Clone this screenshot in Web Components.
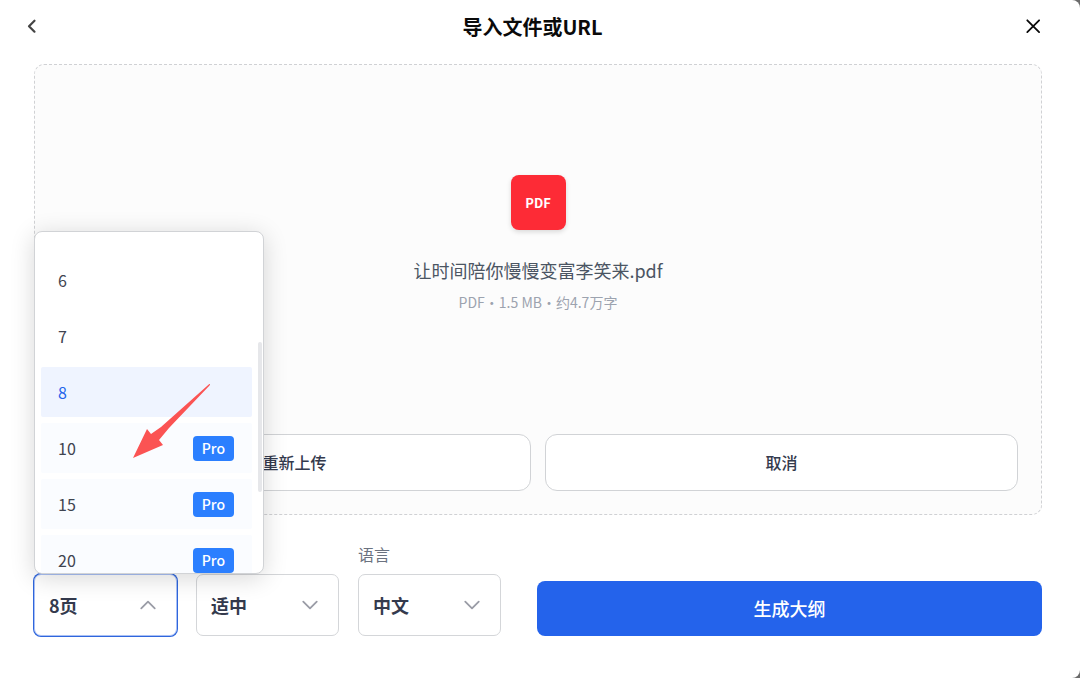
<!DOCTYPE html>
<html lang="zh-CN">
<head>
<meta charset="utf-8">
<meta name="viewport" content="width=device-width, initial-scale=1">
<title>导入文件或URL</title>
<style>
  body {
    margin: 0;
    background: #6b6b6b;
    font-family: "Noto Sans CJK SC", "Noto Sans", sans-serif;
    color: #343a4d;
  }
</style>
</head>
<body>
  <import-dialog heading="导入文件或URL">
    <file-drop-zone>
      <file-card type="PDF" name="让时间陪你慢慢变富李笑来.pdf" meta="PDF・1.5 MB・约4.7万字"></file-card>
      <outline-button slot="actions">重新上传</outline-button>
      <outline-button slot="actions">取消</outline-button>
    </file-drop-zone>
    <select-field slot="options" name="页数" value="8页" open>
      <option-menu slot="menu" selected="8" options="6,7,8,10,15,20" pro="10,15,20"></option-menu>
    </select-field>
    <select-field slot="options" name="文本量" value="适中"></select-field>
    <select-field slot="options" label="语言" value="中文"></select-field>
    <primary-button slot="submit">生成大纲</primary-button>
  </import-dialog>

<script>
class ImportDialog extends HTMLElement {
  constructor() {
    super();
    this.attachShadow({ mode: "open" });
  }

  connectedCallback() {
    this.shadowRoot.innerHTML = `
      <style>
        :host {
          display: flex;
          flex-direction: column;
          box-sizing: border-box;
          min-height: 100vh;
          padding-bottom: 42px;
          background: #fff;
          border-radius: 0 8px 8px 0;
        }
        header {
          display: flex;
          align-items: center;
          justify-content: space-between;
          height: 52px;
          padding: 0 35px 0 20px;
        }
        h1 {
          margin: 0;
          padding-top: 2px;
          font-size: 20px;
          line-height: 28px;
          font-weight: 700;
          color: #0a0a0a;
        }
        button {
          display: flex;
          padding: 0;
          border: 0;
          background: none;
          color: #444;
          cursor: pointer;
        }
        button.close { color: #0a0a0a; }
        main {
          flex: 1;
          display: flex;
          padding: 12px 38px 0 34px;
        }
        footer {
          display: flex;
          align-items: flex-end;
          gap: 36px;
          margin-top: 27px;
          padding: 0 38px 0 34px;
        }
        .options {
          display: flex;
          align-items: flex-end;
          gap: 19px;
        }
        .submit { flex: 1; }
      </style>
      <header>
        <button type="button" aria-label="返回">
          <svg width="24" height="24" viewBox="0 0 24 24" fill="none" stroke="currentColor" stroke-width="2.2" stroke-linecap="round" stroke-linejoin="round"><path d="M14.500 6.700 9 12.200l5.500 5.500"/></svg>
        </button>
        <h1>${this.getAttribute("heading")}</h1>
        <button type="button" class="close" aria-label="关闭">
          <svg width="24" height="24" viewBox="0 0 24 24" fill="none" stroke="currentColor" stroke-width="1.8" stroke-linecap="round"><path d="M6.300 6.300 18.100 18.100M18.100 6.300 6.300 18.100"/></svg>
        </button>
      </header>
      <main><slot></slot></main>
      <footer>
        <div class="options"><slot name="options"></slot></div>
        <div class="submit"><slot name="submit"></slot></div>
      </footer>
    `;
  }
}

class FileDropZone extends HTMLElement {
  constructor() {
    super();
    this.attachShadow({ mode: "open" });
  }

  connectedCallback() {
    this.shadowRoot.innerHTML = `
      <style>
        :host {
          flex: 1;
          display: flex;
          flex-direction: column;
          gap: 12px;
          box-sizing: border-box;
          padding: 0 23px 23px;
          border: 1px dashed #d0d1d4;
          border-radius: 10px;
          background: #fcfcfc;
        }
        .file {
          flex: 1;
          display: flex;
          align-items: center;
          justify-content: center;
        }
        .actions { display: flex; gap: 14px; }
        ::slotted(outline-button) { flex: 1; }
      </style>
      <div class="file"><slot></slot></div>
      <div class="actions"><slot name="actions"></slot></div>
    `;
  }
}

class FileCard extends HTMLElement {
  constructor() {
    super();
    this.attachShadow({ mode: "open" });
  }

  connectedCallback() {
    this.shadowRoot.innerHTML = `
      <style>
        :host {
          display: flex;
          flex-direction: column;
          align-items: center;
        }
        .icon {
          display: flex;
          align-items: center;
          justify-content: center;
          width: 55px;
          height: 55px;
          border-radius: 8px;
          background: #fd2b36;
          box-shadow: 0 2px 5px rgba(0, 0, 0, 0.14);
          color: #fff;
          font-size: 13px;
          font-weight: 700;
        }
        .name {
          margin-top: 26px;
          font-size: 18px;
          line-height: 28px;
          color: #4b5563;
        }
        .meta {
          margin-top: 8px;
          font-size: 14px;
          line-height: 20px;
          color: #9ca3af;
        }
      </style>
      <div class="icon">${this.getAttribute("type")}</div>
      <div class="name">${this.getAttribute("name")}</div>
      <div class="meta">${this.getAttribute("meta")}</div>
    `;
  }
}

class OutlineButton extends HTMLElement {
  constructor() {
    super();
    this.attachShadow({ mode: "open" });
    this.shadowRoot.innerHTML = `
      <style>
        :host { display: block; }
        button {
          width: 100%;
          height: 57px;
          padding: 0 0 2px;
          border: 1px solid #d1d3d6;
          border-radius: 12px;
          background: #fff;
          color: inherit;
          font: 500 16px/24px "Noto Sans CJK SC", sans-serif;
          cursor: pointer;
        }
      </style>
      <button type="button"><slot></slot></button>
    `;
  }
}

class PrimaryButton extends HTMLElement {
  constructor() {
    super();
    this.attachShadow({ mode: "open" });
    this.shadowRoot.innerHTML = `
      <style>
        :host { display: block; }
        button {
          display: block;
          width: 100%;
          height: 55px;
          padding: 0 0 2px;
          border: 0;
          border-radius: 8px;
          background: #2463eb;
          color: #fff;
          font: 500 18px/28px "Noto Sans CJK SC", sans-serif;
          cursor: pointer;
        }
      </style>
      <button type="button"><slot></slot></button>
    `;
  }
}

class SelectField extends HTMLElement {
  constructor() {
    super();
    this.attachShadow({ mode: "open" });
  }

  connectedCallback() {
    const label = this.getAttribute("label");
    const name = label || this.getAttribute("name");
    const chevron = this.hasAttribute("open") ? "M2.5 13.8 10 6.3l7.5 7.5" : "M2.5 6.2 10 13.7l7.5-7.5";
    this.shadowRoot.innerHTML = `
      <style>
        :host {
          display: flex;
          flex-direction: column;
          gap: 8px;
          width: 143px;
        }
        label {
          font-size: 16px;
          line-height: 24px;
          color: #6b7280;
        }
        .box {
          position: relative;
          display: grid;
          align-items: center;
        }
        select, svg { grid-area: 1 / 1; }
        select {
          appearance: none;
          width: 100%;
          height: 62px;
          padding: 0 44px 0 14px;
          border: 1px solid #d4d6d9;
          border-radius: 7px;
          background: #fff;
          color: inherit;
          font: 600 18px/28px "Noto Sans CJK SC", sans-serif;
        }
        :host([open]) select {
          border-color: #a9c0f5;
          box-shadow: 0 0 0 1px #2f66dc;
        }
        svg {
          justify-self: end;
          margin-right: 20px;
          pointer-events: none;
        }
      </style>
      ${label ? `<label for="field">${label}</label>` : ""}
      <div class="box">
        <select id="field" aria-label="${name}"><option>${this.getAttribute("value")}</option></select>
        <svg width="18" height="18" viewBox="0 0 20 20" fill="none" stroke="#9a9ca6" stroke-width="2" stroke-linecap="round" stroke-linejoin="round"><path d="${chevron}"/></svg>
        <slot name="menu"></slot>
      </div>
    `;
  }
}

class OptionMenu extends HTMLElement {
  constructor() {
    super();
    this.attachShadow({ mode: "open" });
  }

  connectedCallback() {
    const options = this.getAttribute("options").split(",");
    const pro = this.getAttribute("pro").split(",");
    const selected = this.getAttribute("selected");

    this.shadowRoot.innerHTML = `
      <style>
        :host {
          position: absolute;
          left: 0;
          bottom: 100%;
          z-index: 10;
          box-sizing: border-box;
          width: 230px;
          border: 1px solid #d1d3d6;
          border-radius: 8px;
          background: #fff;
          box-shadow: 0 4px 24px rgba(0, 0, 0, 0.16);
        }
        .list {
          display: flex;
          flex-direction: column;
          gap: 6px;
          box-sizing: border-box;
          max-height: 341px;
          padding: 23px 11px 6px 6px;
          border-radius: 7px;
          overflow: hidden;
        }
        button {
          flex: none;
          display: flex;
          align-items: center;
          justify-content: space-between;
          height: 50px;
          padding: 0 18px 0 17px;
          border: 0;
          border-radius: 2px;
          background: none;
          color: #3f4450;
          font: 400 16px/24px "Noto Sans CJK SC", sans-serif;
          cursor: pointer;
        }
        button.pro { background: #fafcff; }
        button[aria-selected="true"] {
          background: #eff4ff;
          color: #2463eb;
        }
        .badge {
          padding: 0 9px;
          border-radius: 4px;
          background: #2b7fff;
          color: #fff;
          font-size: 14px;
          line-height: 25px;
          font-weight: 500;
        }
        .thumb {
          position: absolute;
          top: 110px;
          right: 1px;
          width: 4px;
          height: 150px;
          border-radius: 2px;
          background: #e6e7ea;
        }
        .arrow {
          position: absolute;
          left: 98px;
          top: 152px;
        }
      </style>
      <div class="list" role="listbox" aria-label="页数">
        ${options
          .map(
            (o) => `<button type="button" role="option" class="${pro.includes(o) ? "pro" : ""}" aria-selected="${o === selected}"><span>${o}</span>${pro.includes(o) ? `<span class="badge">Pro</span>` : ""}</button>`
          )
          .join("")}
      </div>
      <div class="thumb"></div>
      <svg class="arrow" width="78" height="76" viewBox="0 0 78 76" fill="#fb5353"><path d="M0 74 14 45 18 50 28 43 76 .3Q78-.4 76.500 1.500L36 44 26 56 30 61Z"/></svg>
    `;
  }
}

customElements.define("import-dialog", ImportDialog);
customElements.define("file-drop-zone", FileDropZone);
customElements.define("file-card", FileCard);
customElements.define("outline-button", OutlineButton);
customElements.define("primary-button", PrimaryButton);
customElements.define("select-field", SelectField);
customElements.define("option-menu", OptionMenu);
</script>
</body>
</html>
